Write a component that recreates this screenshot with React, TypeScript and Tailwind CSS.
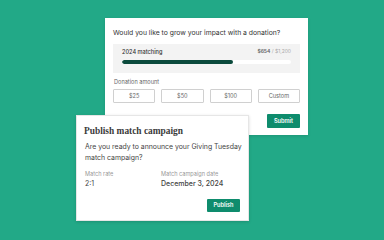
import React from "react";

export default function App() {
  const amounts = ["$25", "$50", "$100", "Custom"];
  return (
    <div
      className="w-[384px] h-[240px] overflow-hidden bg-[#22a987] flex flex-col"
      style={{ fontFamily: "Inter, 'Liberation Sans', sans-serif" }}
    >
      {/* Top card */}
      <div className="relative z-0 ml-[105px] mt-[18px] w-[203px] h-[117px] bg-white shadow-[0_1px_3px_rgba(0,0,0,0.12)] px-[8px] pt-[10px] flex flex-col">
        <div className="text-[6.8px] leading-[10px] text-[#333]">
          Would you like to grow your impact with a donation?
        </div>
        <div className="mt-[6px] bg-[#f3f3f3] h-[29px] px-[9px] pt-[3px] flex flex-col">
          <div className="flex justify-between items-center h-[10px]">
            <span className="text-[5.6px] font-medium text-[#333]">2024 matching</span>
            <span className="text-[5px] text-[#aaa]">
              <span className="font-semibold text-[#666]">$654</span> / $1,200
            </span>
          </div>
          <div className="mt-[3px] h-[4px] rounded-full bg-white overflow-hidden">
            <div className="h-full w-[111px] rounded-full bg-[#0b4a3c]" />
          </div>
        </div>
        <div className="mt-[5px] text-[5.6px] leading-[8px] text-[#666] pl-[1px]">Donation amount</div>
        <div className="mt-[3px] grid grid-cols-4 gap-[6px]">
          {amounts.map((a) => (
            <div
              key={a}
              className="h-[14px] border border-[#d0d0d0] rounded-[1px] flex items-center justify-center text-[5.6px] text-[#666]"
            >
              {a}
            </div>
          ))}
        </div>
        <div className="mt-[11px] flex justify-end">
          <div className="w-[33px] h-[14px] bg-[#0e8c6d] rounded-[1px] flex items-center justify-center text-[5.6px] font-semibold text-white">
            Submit
          </div>
        </div>
      </div>

      {/* Bottom card */}
      <div className="relative z-10 ml-[76px] mt-[-20px] w-[173px] h-[106px] bg-white shadow-[0_1px_3px_rgba(0,0,0,0.15)] border border-[#e6e6e6] pl-[7px] pr-[8px] pt-[9px] flex flex-col">
        <div
          className="text-[9.4px] leading-[12px] font-bold text-[#3a3a3a]"
          style={{ fontFamily: "'Liberation Serif', serif" }}
        >
          Publish match campaign
        </div>
        <div className="mt-[4px] mr-[-4px] text-[6.9px] leading-[11px] text-[#444] pl-[1px]">
          Are you ready to announce your Giving Tuesday match campaign?
        </div>
        <div className="mt-[7px] grid grid-cols-[76px_1fr] pl-[1px]">
          <div className="flex flex-col">
            <span className="text-[5.6px] leading-[8px] text-[#999]">Match rate</span>
            <span className="mt-[1px] text-[7px] leading-[10px] text-[#444]">2:1</span>
          </div>
          <div className="flex flex-col">
            <span className="text-[5.6px] leading-[8px] text-[#999]">Match campaign date</span>
            <span className="mt-[1px] text-[7px] leading-[10px] font-medium text-[#444]">December 3, 2024</span>
          </div>
        </div>
        <div className="mt-[10px] flex justify-end">
          <div className="w-[33px] h-[13px] bg-[#0e8c6d] rounded-[1px] flex items-center justify-center text-[5.6px] font-semibold text-white">
            Publish
          </div>
        </div>
      </div>
    </div>
  );
}
